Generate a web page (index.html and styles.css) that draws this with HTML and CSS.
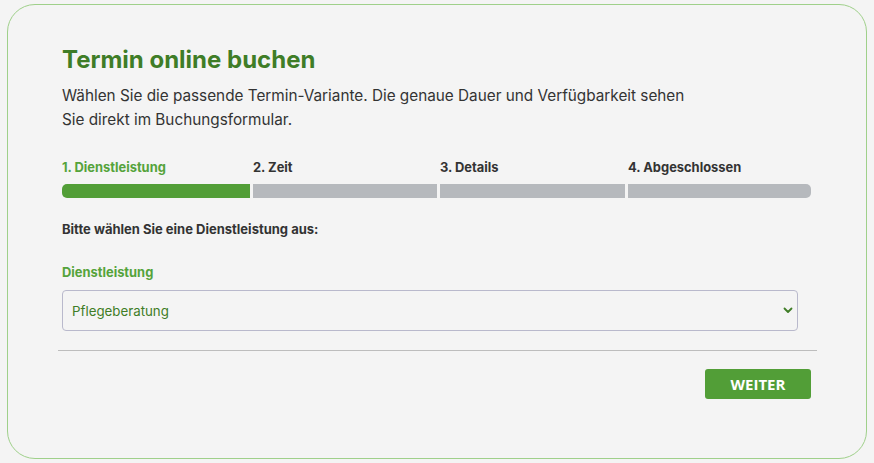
FILE: index.html
```html
<!DOCTYPE html>
<html lang="de">
<head>
  <meta charset="UTF-8" />
  <meta name="viewport" content="width=device-width, initial-scale=1.0"/>
  <title>Termin online buchen</title>
  <link rel="stylesheet" href="styles.css">
</head>
<body>
  <div class="booking-card">
    <h1 class="title">Termin online buchen</h1>
    <p class="intro">Wählen Sie die passende Termin-Variante. Die genaue Dauer und Verfügbarkeit sehen<br>Sie direkt im Buchungsformular.</p>

    <div class="steps">
      <div class="step active">
        <span class="step-label">1. Dienstleistung</span>
        <div class="step-bar"></div>
      </div>
      <div class="step">
        <span class="step-label">2. Zeit</span>
        <div class="step-bar"></div>
      </div>
      <div class="step">
        <span class="step-label">3. Details</span>
        <div class="step-bar"></div>
      </div>
      <div class="step">
        <span class="step-label">4. Abgeschlossen</span>
        <div class="step-bar"></div>
      </div>
    </div>

    <p class="hint">Bitte wählen Sie eine Dienstleistung aus:</p>

    <label class="field-label" for="service">Dienstleistung</label>
    <div class="select-wrap">
      <select id="service" class="service-select">
        <option>Pflegeberatung</option>
      </select>
      <svg class="chevron" width="10" height="7" viewBox="0 0 10 7">
        <path d="M1.5 1.5 L5 5 L8.5 1.5" fill="none" stroke="#3f7d27" stroke-width="1.8" stroke-linecap="round" stroke-linejoin="round"/>
      </svg>
    </div>

    <hr class="divider">

    <div class="actions">
      <button class="next-btn">WEITER</button>
    </div>
  </div>
</body>
</html>
```

FILE: styles.css
```css
body {
  margin: 0;
  background: #f4f4f4;
  font-family: "Inter", "Open Sans", sans-serif;
  color: #333;
}

.booking-card {
  margin: 4px 0 0 7px;
  width: 860px;
  height: 455px;
  box-sizing: border-box;
  border: 1px solid #9fd08a;
  border-radius: 28px;
  background: #f4f4f4;
  padding: 40px 55px 0 54px;
}

.title {
  margin: 0;
  font-size: 24px;
  font-weight: 700;
  color: #3f7d27;
  line-height: 30px;
}

.intro {
  margin: 9px 0 0;
  font-size: 15.3px;
  line-height: 24px;
  color: #333;
}

.steps {
  display: grid;
  grid-template-columns: 188fr 184fr 185fr 183fr;
  gap: 3px;
  margin-top: 28px;
}

.step {
  display: flex;
  flex-direction: column;
}

.step-label {
  font-size: 12.9px;
  font-weight: 700;
  color: #333;
  line-height: 16px;
}

.step.active .step-label {
  color: #55a33b;
}

.step-bar {
  margin-top: 8px;
  height: 14px;
  background: #b6b9bd;
}

.step.active .step-bar {
  background: #529e37;
}

.step:first-child .step-bar {
  border-radius: 5px 0 0 5px;
}

.step:last-child .step-bar {
  border-radius: 0 5px 5px 0;
}

.hint {
  margin: 22px 0 0;
  font-size: 13px;
  font-weight: 700;
  line-height: 18px;
  color: #333;
}

.field-label {
  display: block;
  margin-top: 26px;
  font-size: 12.9px;
  font-weight: 700;
  line-height: 18px;
  color: #55a33b;
}

.select-wrap {
  position: relative;
  margin-top: 8px;
  width: 736px;
}

.service-select {
  -webkit-appearance: none;
  appearance: none;
  display: block;
  width: 100%;
  height: 41px;
  padding: 0 9px;
  border: 1px solid #b9b9cc;
  border-radius: 4px;
  background: #f4f4f4;
  font-family: inherit;
  font-size: 13.3px;
  color: #3f7d27;
  outline: none;
}

.chevron {
  position: absolute;
  right: 5px;
  top: 17px;
  pointer-events: none;
}

.divider {
  margin: 19px -6px 0 -4px;
  border: none;
  border-top: 1px solid #bdbdbd;
}

.actions {
  display: flex;
  justify-content: flex-end;
  margin-top: 18px;
}

.next-btn {
  width: 106px;
  height: 30px;
  border: none;
  border-radius: 3px;
  background: #529e37;
  color: white;
  font-family: "Open Sans", sans-serif;
  font-size: 15px;
  font-weight: 700;
  cursor: pointer;
}
```
